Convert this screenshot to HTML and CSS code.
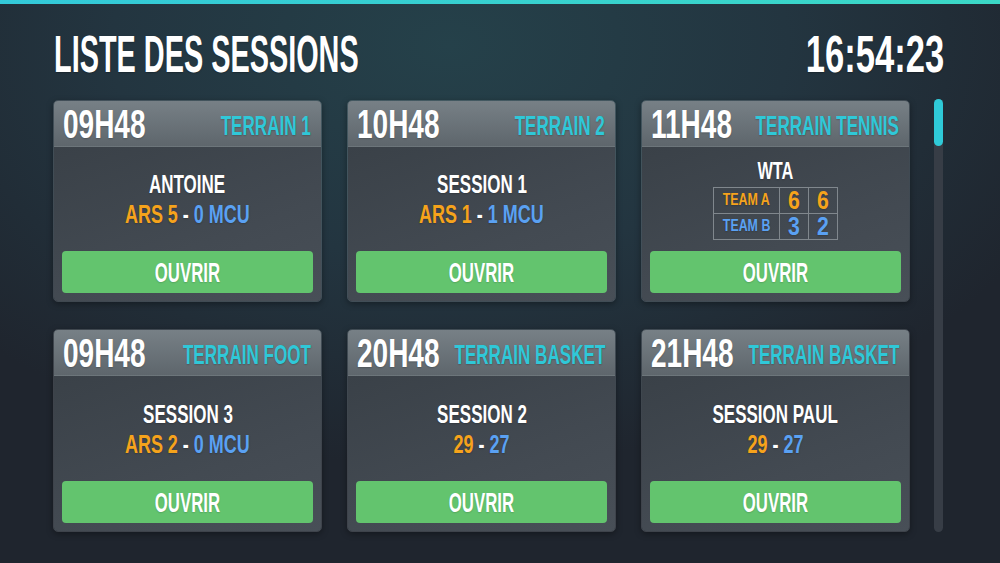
FILE: index.html
```html
<!DOCTYPE html>
<html lang="fr">
<head>
<meta charset="utf-8">
<title>Liste des sessions</title>
<link rel="stylesheet" href="styles.css">
</head>
<body>
<div class="topbar"></div>
<header class="header">
  <h1 class="title"><span class="sx sx-title">LISTE DES SESSIONS</span></h1>
  <div class="clock"><span class="sx sx-clock">16:54:23</span></div>
</header>
<main class="main">
  <section class="grid">
    <article class="card">
      <div class="card-head">
        <span class="time"><span class="sx sx-time">09H48</span></span>
        <span class="terrain"><span class="sx sx-terrain">TERRAIN 1</span></span>
      </div>
      <div class="card-body">
        <div class="content">
          <div class="name"><span class="sx sx-name">ANTOINE</span></div>
          <div class="score"><span class="sx sx-score"><span class="home">ARS 5</span> - <span class="away">0 MCU</span></span></div>
        </div>
        <button class="btn"><span class="sx sx-btn">OUVRIR</span></button>
      </div>
    </article>
    <article class="card">
      <div class="card-head">
        <span class="time"><span class="sx sx-time">10H48</span></span>
        <span class="terrain"><span class="sx sx-terrain">TERRAIN 2</span></span>
      </div>
      <div class="card-body">
        <div class="content">
          <div class="name"><span class="sx sx-name">SESSION 1</span></div>
          <div class="score"><span class="sx sx-score"><span class="home">ARS 1</span> - <span class="away">1 MCU</span></span></div>
        </div>
        <button class="btn"><span class="sx sx-btn">OUVRIR</span></button>
      </div>
    </article>
    <article class="card">
      <div class="card-head">
        <span class="time"><span class="sx sx-time">11H48</span></span>
        <span class="terrain"><span class="sx sx-terrain">TERRAIN TENNIS</span></span>
      </div>
      <div class="card-body">
        <div class="content">
          <div class="name name-wta"><span class="sx sx-name">WTA</span></div>
          <table class="sets">
            <tr>
              <td class="team home"><span class="sx sx-team">TEAM A</span></td>
              <td class="set home"><span class="sx sx-digit">6</span></td>
              <td class="set home"><span class="sx sx-digit">6</span></td>
            </tr>
            <tr>
              <td class="team away"><span class="sx sx-team">TEAM B</span></td>
              <td class="set away"><span class="sx sx-digit">3</span></td>
              <td class="set away"><span class="sx sx-digit">2</span></td>
            </tr>
          </table>
        </div>
        <button class="btn"><span class="sx sx-btn">OUVRIR</span></button>
      </div>
    </article>
    <article class="card">
      <div class="card-head">
        <span class="time"><span class="sx sx-time">09H48</span></span>
        <span class="terrain"><span class="sx sx-terrain">TERRAIN FOOT</span></span>
      </div>
      <div class="card-body">
        <div class="content">
          <div class="name"><span class="sx sx-name">SESSION 3</span></div>
          <div class="score"><span class="sx sx-score"><span class="home">ARS 2</span> - <span class="away">0 MCU</span></span></div>
        </div>
        <button class="btn"><span class="sx sx-btn">OUVRIR</span></button>
      </div>
    </article>
    <article class="card">
      <div class="card-head">
        <span class="time"><span class="sx sx-time">20H48</span></span>
        <span class="terrain"><span class="sx sx-terrain">TERRAIN BASKET</span></span>
      </div>
      <div class="card-body">
        <div class="content">
          <div class="name"><span class="sx sx-name">SESSION 2</span></div>
          <div class="score"><span class="sx sx-score"><span class="home">29</span> - <span class="away">27</span></span></div>
        </div>
        <button class="btn"><span class="sx sx-btn">OUVRIR</span></button>
      </div>
    </article>
    <article class="card">
      <div class="card-head">
        <span class="time"><span class="sx sx-time">21H48</span></span>
        <span class="terrain"><span class="sx sx-terrain">TERRAIN BASKET</span></span>
      </div>
      <div class="card-body">
        <div class="content">
          <div class="name"><span class="sx sx-name">SESSION PAUL</span></div>
          <div class="score"><span class="sx sx-score"><span class="home">29</span> - <span class="away">27</span></span></div>
        </div>
        <button class="btn"><span class="sx sx-btn">OUVRIR</span></button>
      </div>
    </article>
  </section>
  <div class="scrollbar"><div class="thumb"></div></div>
</main>
</body>
</html>
```

FILE: styles.css
```css
* { box-sizing: border-box; margin: 0; padding: 0; }

html, body { width: 1000px; height: 563px; overflow: hidden; }

body {
  background: radial-gradient(ellipse 75% 85% at 45% 8%, #25414a 0%, #233540 45%, #1f252e 88%);
  font-family: "Liberation Sans", Arial, sans-serif;
  font-weight: 700;
  color: #fff;
}

.topbar { height: 4px; background: linear-gradient(90deg, #33c9d9, #3bd8c6); }

.header {
  display: flex;
  justify-content: space-between;
  align-items: flex-start;
  height: 96px;
  padding: 24px 56px 0 54px;
}

.title, .clock {
  font-size: 52px;
  line-height: 52px;
  font-weight: 700;
  text-shadow: 0 1px 2px rgba(0, 0, 0, .25);
}

.sx { display: inline-block; white-space: nowrap; }
.sx-title { transform: scaleX(.555); transform-origin: left center; }
.sx-clock { transform: scaleX(.665); transform-origin: right center; }
.sx-time { transform: scaleX(.70); transform-origin: left center; }
.sx-terrain { transform: scaleX(.61); transform-origin: right center; }
.sx-name { transform: scaleX(.68); }
.sx-score { transform: scaleX(.69); }
.sx-btn { transform: scaleX(.60); }
.sx-team { transform: scaleX(.73); }
.sx-digit { transform: scaleX(.85); }

.main { display: flex; align-items: flex-start; gap: 24px; padding-left: 53px; }

.grid {
  display: grid;
  grid-template-columns: repeat(3, 269px);
  grid-template-rows: 202px 203px;
  column-gap: 25px;
  row-gap: 27px;
}

.card {
  display: flex;
  flex-direction: column;
  border: 1px solid rgba(255, 255, 255, .14);
  border-radius: 5px;
  overflow: hidden;
  box-shadow: 0 2px 6px rgba(0, 0, 0, .35);
}

.card-head {
  flex: none;
  height: 46px;
  display: flex;
  align-items: center;
  padding: 0 10px 0 9px;
  background: linear-gradient(#778086, #5e666c);
  border-bottom: 1px solid rgba(0, 0, 0, .08);
  text-shadow: 0 1px 2px rgba(0, 0, 0, .2);
}

.time { flex: none; width: 90px; font-size: 40px; line-height: 46px; }
.terrain {
  flex: 1 1 0;
  min-width: 0;
  display: flex;
  justify-content: flex-end;
  font-size: 28px;
  line-height: 46px;
  padding-top: 4px;
  color: #2fc8d8;
}

.card-body {
  flex: 1;
  display: flex;
  flex-direction: column;
  background: linear-gradient(160deg, #3a4148 0%, #434a52 60%, #484f57 100%);
}

.content {
  flex: 1;
  display: flex;
  flex-direction: column;
  align-items: center;
  justify-content: center;
  text-shadow: 0 1px 2px rgba(0, 0, 0, .2);
}

.name { font-size: 25px; line-height: 30px; text-align: center; }
.score { font-size: 26px; line-height: 30px; text-align: center; }
.name-wta { font-size: 24px; line-height: 24px; }

.home { color: #f6a31b; }
.away { color: #5aa1f3; }

.sets { border-collapse: collapse; margin-top: 4px; }
.sets td {
  border: 1px solid #80878d;
  height: 26px;
  padding: 0;
  text-align: center;
  vertical-align: middle;
}
.team { width: 65px; font-size: 17px; line-height: 24px; }
.set { width: 29px; font-size: 25px; line-height: 24px; }

.btn {
  flex: none;
  height: 42px;
  margin: 0 8px 8px;
  padding-top: 2px;
  border: none;
  border-radius: 4px;
  background: #63c46e;
  color: #fff;
  font: inherit;
  font-size: 28px;
  line-height: 40px;
  text-align: center;
  text-shadow: 0 1px 2px rgba(0, 0, 0, .15);
}

.scrollbar {
  width: 9px;
  height: 433px;
  margin-top: -1px;
  border-radius: 5px;
  background: #373d46;
  display: flex;
  flex-direction: column;
}

.thumb { height: 47px; border-radius: 5px; background: #2fcad8; }
```
